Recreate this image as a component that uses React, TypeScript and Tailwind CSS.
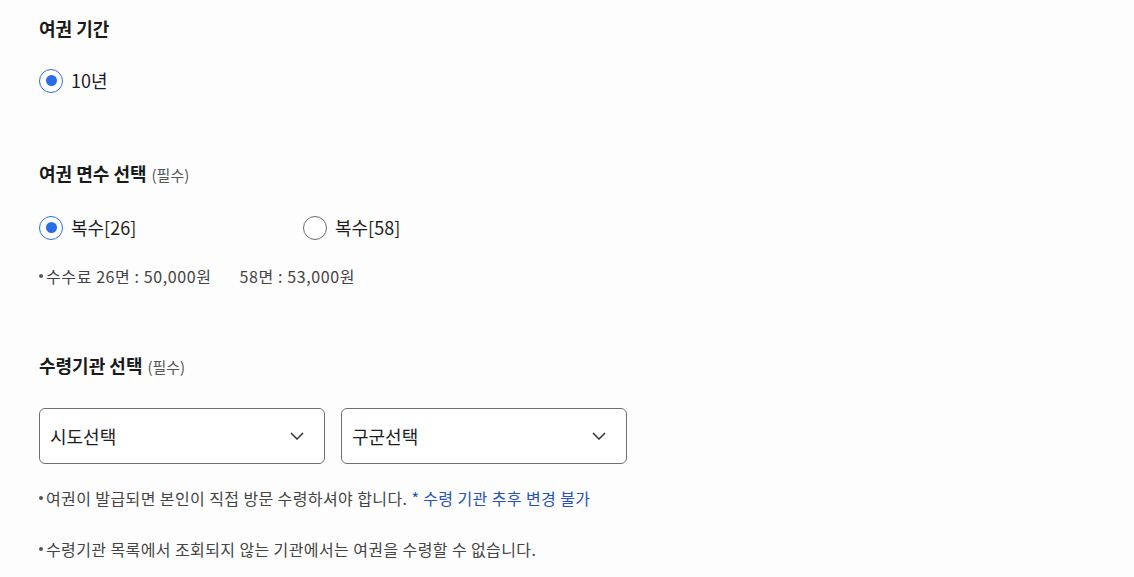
import React from "react";

function Radio({ checked, label }: { checked?: boolean; label: string }) {
  return (
    <label className="flex items-center gap-[8px] cursor-pointer">
      <span
        className={
          checked
            ? "flex h-[24px] w-[24px] items-center justify-center rounded-full border-[1.5px] border-[#2b6de6] bg-white"
            : "flex h-[24px] w-[24px] items-center justify-center rounded-full border-[1.5px] border-[#6b6b6b] bg-white"
        }
      >
        {checked && <span className="h-[11px] w-[11px] rounded-full bg-[#2b6de6]" />}
      </span>
      <span className="text-[18px] text-[#1d1d1d]">{label}</span>
    </label>
  );
}

function Select({ placeholder }: { placeholder: string }) {
  return (
    <div className="flex h-[56px] w-[286px] items-center justify-between rounded-[6px] border border-[#6f6f6f] bg-white pl-[10px] pr-[20px]">
      <span className="text-[18px] text-[#1d1d1d]">{placeholder}</span>
      <svg width="14" height="8" viewBox="0 0 14 8" fill="none">
        <path d="M1 1l6 6 6-6" stroke="#333" strokeWidth="1.5" />
      </svg>
    </div>
  );
}

function Title({ text, required }: { text: string; required?: boolean }) {
  return (
    <h2 className="flex items-baseline gap-[5px] text-[18px] font-bold text-[#1a1a1a]">
      {text}
      {required && <span className="text-[15px] font-normal text-[#555]">(필수)</span>}
    </h2>
  );
}

function Note({ children, className }: { children: React.ReactNode; className?: string }) {
  return (
    <p className={"flex items-center text-[16px] text-[#444] " + (className ?? "")}>
      <span className="mr-[3px] h-[4px] w-[4px] shrink-0 rounded-full bg-[#555]" />
      <span>{children}</span>
    </p>
  );
}

export default function App() {
  return (
    <div
      className="min-h-[577px] bg-[#fdfdfd] px-[39px] pt-[15px]"
      style={{ fontFamily: '"Noto Sans CJK KR", "Noto Sans", sans-serif' }}
    >
      <section>
        <Title text="여권 기간" />
        <div className="mt-[25px]">
          <Radio checked label="10년" />
        </div>
      </section>

      <section className="mt-[66px]">
        <Title text="여권 면수 선택" required />
        <div className="mt-[27px] flex">
          <div className="w-[264px]">
            <Radio checked label="복수[26]" />
          </div>
          <Radio label="복수[58]" />
        </div>
        <Note className="mt-[23px] tracking-[0.6px]">
          수수료 26면 : 50,000원<span className="ml-[28px]">58면 : 53,000원</span>
        </Note>
      </section>

      <section className="mt-[64px]">
        <Title text="수령기관 선택" required />
        <div className="mt-[29px] flex gap-[16px]">
          <Select placeholder="시도선택" />
          <Select placeholder="구군선택" />
        </div>
        <Note className="mt-[22px] tracking-[0.4px]">
          <>
            여권이 발급되면 본인이 직접 방문 수령하셔야 합니다.{" "}
            <span className="text-[#2452b8]">* 수령 기관 추후 변경 불가</span>
          </>
        </Note>
        <Note className="mt-[27px] tracking-[0.4px]">
          수령기관 목록에서 조회되지 않는 기관에서는 여권을 수령할 수 없습니다.
        </Note>
      </section>
    </div>
  );
}
